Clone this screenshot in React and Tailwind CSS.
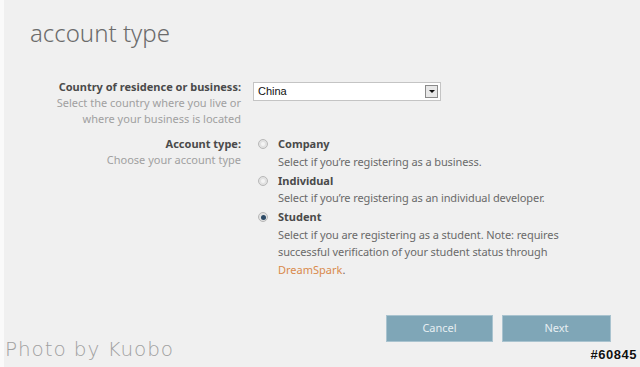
import React, { useState } from "react";

const options = [
  { id: "company", title: "Company", desc: ["Select if you\u2019re registering as a business."] },
  { id: "individual", title: "Individual", desc: ["Select if you\u2019re registering as an individual developer."] },
  {
    id: "student",
    title: "Student",
    desc: [
      "Select if you are registering as a student. Note: requires",
      "successful verification of your student status through",
    ],
    link: "DreamSpark",
  },
];

const Radio = ({ checked }) => (
  <span className="mt-[3px] flex h-[10px] w-[10px] shrink-0 items-center justify-center rounded-full border border-[#b8b8b8] bg-[#e2e2e2]">
    {checked ? (
      <span className="h-[5px] w-[5px] rounded-full bg-[#2c4a66]" />
    ) : (
      <span className="h-[4px] w-[4px] rounded-full bg-[#f4f4f4]" />
    )}
  </span>
);

export default function App() {
  const [type, setType] = useState("student");

  return (
    <div className="relative h-[367px] w-[640px] overflow-hidden bg-[#f0f0f0] font-['Noto_Sans',sans-serif]">
      <div className="absolute left-0 top-0 h-full w-[4px] bg-[#fafafa]" />

      <h1 className="pl-[30px] pt-[17px] text-[24px] font-light leading-[32px] text-[#6b6b6b]">
        account type
      </h1>

      <div className="mt-[30px] grid grid-cols-[241px_1fr] gap-x-[12px]">
        <div className="text-right text-[11px] leading-[16px]">
          <div className="font-bold text-[#4a4a4a]">Country of residence or business:</div>
          <div className="text-[#a0a0a0]">Select the country where you live or</div>
          <div className="text-[#a0a0a0]">where your business is located</div>
        </div>
        <div className="pt-[3px]">
          <div className="flex h-[19px] w-[188px] items-center justify-between border border-[#c4c4c4] bg-white pl-[4px] pr-[2px]">
            <span className="font-['Liberation_Sans',sans-serif] text-[11px] text-[#111]">China</span>
            <span className="flex h-[13px] w-[13px] items-center justify-center border border-[#8a8a8a] bg-[#e8e8e8]">
              <span className="h-0 w-0 border-x-[3px] border-t-[3px] border-x-transparent border-t-[#111]" />
            </span>
          </div>
        </div>

        <div className="mt-[9px] text-right text-[11px] leading-[16px]">
          <div className="font-bold text-[#4a4a4a]">Account type:</div>
          <div className="text-[#a0a0a0]">Choose your account type</div>
        </div>
        <div className="mt-[9px] flex flex-col gap-[2.5px] pl-[5px]">
          {options.map((o) => (
            <div
              key={o.id}
              className="flex cursor-pointer gap-[10px] text-[11px] leading-[17.5px]"
              onClick={() => setType(o.id)}
            >
              <Radio checked={type === o.id} />
              <div className="-mt-[1px]">
                <div className="font-bold text-[#4a4a4a]">{o.title}</div>
                {o.desc.map((d) => (
                  <div key={d} className="tracking-[-0.1px] text-[#6a6a6a]">{d}</div>
                ))}
                {o.link && (
                  <div className="text-[#d98a4c]">
                    {o.link}
                    <span className="text-[#6a6a6a]">.</span>
                  </div>
                )}
              </div>
            </div>
          ))}
        </div>
      </div>

      <div className="absolute bottom-[25px] right-[29px] flex gap-[9px]">
        <button className="h-[27px] w-[107px] border border-[#a9c3cf] bg-[#7fa6b7] text-[11px] text-[#e6eef2]">
          Cancel
        </button>
        <button className="h-[27px] w-[109px] border border-[#a9c3cf] bg-[#7fa6b7] text-[11px] text-[#e6eef2]">
          Next
        </button>
      </div>

      <div className="absolute bottom-[3px] left-[5px] font-['DejaVu_Sans',sans-serif] text-[20px] font-extralight tracking-[0.9px] text-[#a0a0a0]">
        Photo by Kuobo
      </div>
      <div className="absolute bottom-[3px] right-[3px] font-['Liberation_Sans',sans-serif] text-[13px] font-bold tracking-[0.5px] text-[#111] [text-shadow:0_0_1px_#fff,0_0_1px_#fff]">
        #60845
      </div>
    </div>
  );
}
